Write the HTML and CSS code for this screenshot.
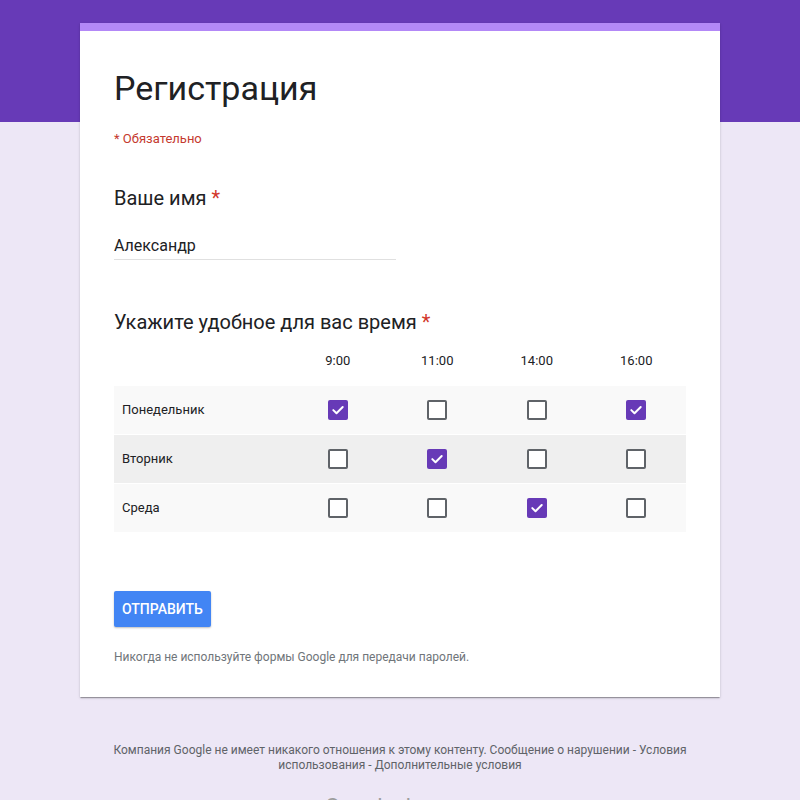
FILE: index.html
```html
<!DOCTYPE html>
<html lang="ru">
<head>
<meta charset="utf-8">
<title>Регистрация</title>
<link rel="stylesheet" href="styles.css">
</head>
<body>
<main class="card">
  <div class="card-body">
    <h1 class="title">Регистрация</h1>
    <div class="required-note">* Обязательно</div>

    <div class="question">
      <div class="q-title">Ваше имя <span class="star">*</span></div>
      <div class="text-input">Александр</div>
    </div>

    <div class="question q-grid">
      <div class="q-title">Укажите удобное для вас время <span class="star">*</span></div>
      <div class="grid">
        <div class="grid-row grid-head">
          <div class="cell-label"></div>
          <div class="cell">9:00</div>
          <div class="cell">11:00</div>
          <div class="cell">14:00</div>
          <div class="cell">16:00</div>
        </div>
        <div class="grid-row row-light">
          <div class="cell-label">Понедельник</div>
          <div class="cell"><span class="cb checked"><svg viewBox="0 0 20 20"><path d="M5.3 10.1 L8.5 13.2 L14.7 7"/></svg></span></div>
          <div class="cell"><span class="cb"></span></div>
          <div class="cell"><span class="cb"></span></div>
          <div class="cell"><span class="cb checked"><svg viewBox="0 0 20 20"><path d="M5.3 10.1 L8.5 13.2 L14.7 7"/></svg></span></div>
        </div>
        <div class="grid-row row-dark">
          <div class="cell-label">Вторник</div>
          <div class="cell"><span class="cb"></span></div>
          <div class="cell"><span class="cb checked"><svg viewBox="0 0 20 20"><path d="M5.3 10.1 L8.5 13.2 L14.7 7"/></svg></span></div>
          <div class="cell"><span class="cb"></span></div>
          <div class="cell"><span class="cb"></span></div>
        </div>
        <div class="grid-row row-light">
          <div class="cell-label">Среда</div>
          <div class="cell"><span class="cb"></span></div>
          <div class="cell"><span class="cb"></span></div>
          <div class="cell"><span class="cb checked"><svg viewBox="0 0 20 20"><path d="M5.3 10.1 L8.5 13.2 L14.7 7"/></svg></span></div>
          <div class="cell"><span class="cb"></span></div>
        </div>
      </div>
    </div>

    <button class="submit" type="button">ОТПРАВИТЬ</button>
    <p class="password-note">Никогда не используйте формы Google для передачи паролей.</p>
  </div>
</main>

<footer class="footer">
  <p class="footer-text">Компания Google не имеет никакого отношения к этому контенту. Сообщение о нарушении - Условия использования - Дополнительные условия</p>
  <div class="footer-logo">Google Формы</div>
</footer>
</body>
</html>
```

FILE: styles.css
```css
* { box-sizing: border-box; }

html, body {
  margin: 0;
  padding: 0;
}

body {
  font-family: Roboto, "Noto Sans", Arial, sans-serif;
  color: #202124;
  background: linear-gradient(#673ab7 0, #673ab7 122px, #ede7f6 122px) no-repeat;
  background-color: #ede7f6;
  min-height: 800px;
  overflow: hidden;
}

.card {
  width: 640px;
  margin: 23px auto 0;
  background: #fff;
  border-top: 8px solid #b388f7;
  box-shadow: 0 2px 1px -1px rgba(0,0,0,0.2), 0 1px 1px 0 rgba(0,0,0,0.14), 0 1px 3px 0 rgba(0,0,0,0.12);
}

.card-body {
  padding: 36px 34px 32px;
}

.title {
  margin: 0;
  font-size: 34px;
  line-height: 42px;
  font-weight: 400;
  color: #202124;
}

.required-note {
  margin-top: 21px;
  font-size: 13px;
  line-height: 18px;
  color: #c5392e;
}

.question {
  margin-top: 38px;
}

.q-title {
  font-size: 20px;
  line-height: 24px;
  font-weight: 400;
  color: #202124;
}

.star {
  color: #d2372b;
}

.text-input {
  margin-top: 24px;
  width: 282px;
  font-size: 16px;
  line-height: 24px;
  padding-bottom: 1px;
  border-bottom: 1px solid #e0e0e0;
  color: #202124;
}

.q-grid {
  margin-top: 50px;
}

.grid {
  margin-top: 3px;
  display: flex;
  flex-direction: column;
  gap: 1px;
}

.grid-row {
  display: grid;
  grid-template-columns: 174px repeat(4, 1fr);
  height: 48px;
  align-items: center;
  font-size: 13px;
  line-height: 18px;
}

.grid-head {
  background: transparent;
}

.row-light { background: #f9f9f9; }
.row-dark { background: #efefef; }

.cell-label {
  padding-left: 8px;
  color: #202124;
}

.cell {
  display: flex;
  justify-content: center;
  align-items: center;
  color: #202124;
}

.cb {
  display: block;
  width: 20px;
  height: 20px;
  border: 2px solid #5f6368;
  border-radius: 2px;
  background: #fff;
}

.cb.checked {
  border: none;
  background: #673ab7;
}

.cb svg {
  display: block;
  width: 20px;
  height: 20px;
}

.cb svg path {
  fill: none;
  stroke: #fff;
  stroke-width: 2;
  stroke-linecap: round;
  stroke-linejoin: round;
}

.submit {
  display: block;
  margin-top: 59px;
  height: 36px;
  padding: 0 8px;
  border: none;
  border-radius: 2px;
  background: #4285f4;
  color: #fff;
  font-family: Roboto, "Noto Sans", Arial, sans-serif;
  font-size: 14px;
  font-weight: 500;
  letter-spacing: 0;
  box-shadow: 0 1px 2px rgba(0,0,0,0.25);
}

.password-note {
  margin: 22px 0 0;
  font-size: 12px;
  line-height: 16px;
  color: #70757a;
}

.footer {
  width: 640px;
  margin: 46px auto 0;
  text-align: center;
}

.footer-text {
  margin: 0;
  font-size: 12px;
  line-height: 15px;
  color: #5f6368;
}

.footer-logo {
  margin-top: 20px;
  font-size: 22px;
  line-height: 28px;
  color: #9e9e9e;
}
```
